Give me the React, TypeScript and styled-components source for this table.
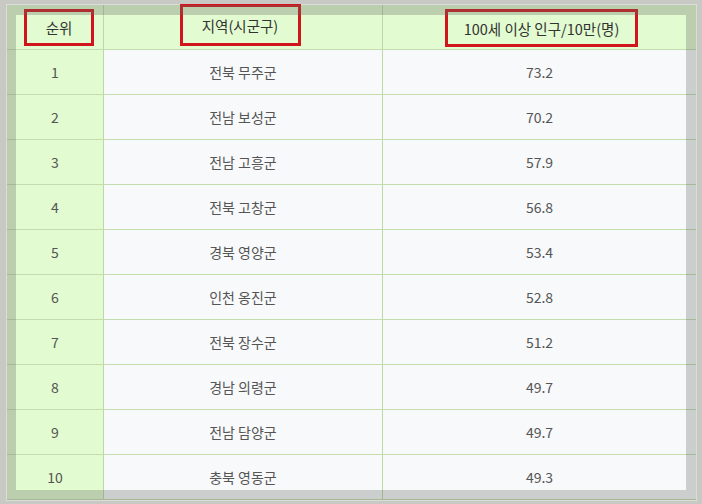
import styled, { createGlobalStyle } from "styled-components";

interface Row {
  rank: number;
  region: string;
  value: string;
}

const rows: Row[] = [
  { rank: 1, region: "전북 무주군", value: "73.2" },
  { rank: 2, region: "전남 보성군", value: "70.2" },
  { rank: 3, region: "전남 고흥군", value: "57.9" },
  { rank: 4, region: "전북 고창군", value: "56.8" },
  { rank: 5, region: "경북 영양군", value: "53.4" },
  { rank: 6, region: "인천 옹진군", value: "52.8" },
  { rank: 7, region: "전북 장수군", value: "51.2" },
  { rank: 8, region: "경남 의령군", value: "49.7" },
  { rank: 9, region: "전남 담양군", value: "49.7" },
  { rank: 10, region: "충북 영동군", value: "49.3" },
];

const GlobalStyle = createGlobalStyle`
  html, body {
    margin: 0;
    padding: 0;
    background: #c8c9c5;
  }
  body {
    font-family: "Noto Sans CJK KR", "Noto Sans", sans-serif;
  }
`;

const Page = styled.div`
  width: 702px;
  height: 504px;
  padding: 4px 0 0 6px;
  box-sizing: border-box;
  overflow: hidden;
`;

const Frame = styled.div`
  position: relative;
  width: 691px;
  border: 1px solid #dcdcd8;
  box-sizing: border-box;

  &::after {
    content: "";
    position: absolute;
    inset: 0;
    border-style: solid;
    border-color: rgba(95, 105, 95, 0.3);
    border-width: 10px 10px 10px 9px;
    pointer-events: none;
  }
`;

const Grid = styled.div`
  display: grid;
  grid-template-columns: 97px 279px 1fr;
  grid-auto-rows: 45px;
`;

const Cell = styled.div<{ $green?: boolean; $head?: boolean }>`
  display: flex;
  align-items: center;
  justify-content: center;
  background: ${(p) => (p.$green ? "#e2fbd0" : "#f8f9fb")};
  border-right: 1px solid #bcd8a4;
  border-bottom: 1px solid #c4dcae;
  font-size: ${(p) => (p.$head ? "14.5px" : "14px")};
  color: ${(p) => (p.$head ? "#333333" : "#555555")};
  white-space: nowrap;

  &:nth-child(3n) {
    border-right: none;
  }
`;

const Mark = styled.span<{ $w: number; $h: number; $dx: number; $dy: number }>`
  display: flex;
  align-items: center;
  justify-content: center;
  width: ${(p) => p.$w}px;
  height: ${(p) => p.$h}px;
  box-sizing: border-box;
  border: 3px solid #d0161c;
  transform: translate(${(p) => p.$dx}px, ${(p) => p.$dy}px);
`;

export default function App() {
  return (
    <Page>
      <GlobalStyle />
      <Frame>
        <Grid>
          <Cell $green $head>
            <Mark $w={70} $h={37} $dx={4} $dy={0}>
              순위
            </Mark>
          </Cell>
          <Cell $green $head>
            <Mark $w={121} $h={42} $dx={-3} $dy={-2}>
              지역(시군구)
            </Mark>
          </Cell>
          <Cell $green $head>
            <Mark $w={193} $h={38} $dx={2} $dy={1}>
              100세 이상 인구/10만(명)
            </Mark>
          </Cell>
          {rows.map((r) => [
            <Cell key={`a${r.rank}`} $green>
              {r.rank}
            </Cell>,
            <Cell key={`b${r.rank}`}>{r.region}</Cell>,
            <Cell key={`c${r.rank}`}>{r.value}</Cell>,
          ])}
        </Grid>
      </Frame>
    </Page>
  );
}
